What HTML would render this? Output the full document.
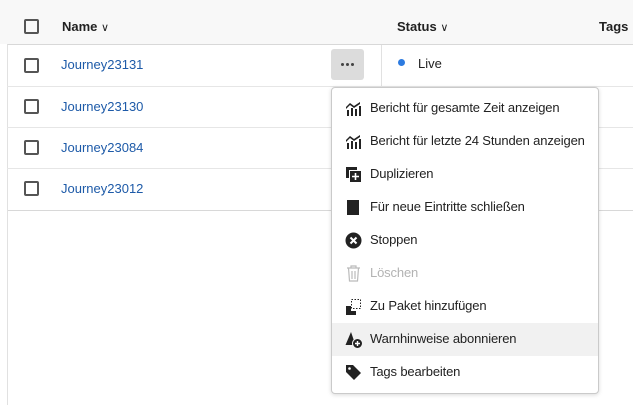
<!DOCTYPE html><html><head><style>
body{margin:0;width:633px;height:405px;background:#fff;font-family:"Liberation Sans",sans-serif;font-size:13px;color:#222;position:relative;overflow:hidden}
.a{position:absolute}
.hdr{left:0;top:0;width:633px;height:44px;background:#f8f8f8}
.cb{width:11px;height:11px;border:2px solid #555;border-radius:2px;position:absolute}
.link{color:#1d5aa8}
.menu{left:331px;top:87px;width:266px;height:305px;border:1px solid #cacaca;border-radius:4px;background:#fff;box-shadow:0 1px 4px rgba(0,0,0,.15);letter-spacing:-0.15px}
.it{position:absolute;left:0;width:266px;height:33px;line-height:32px}
.it span{position:absolute;left:38px}
.it svg{position:absolute;left:13px;top:8px}
</style></head><body>
<div class="a hdr"></div>
<div class="cb" style="left:24px;top:19px"></div>
<div class="a" style="left:62px;top:19px;font-weight:bold">Name <span style="font-weight:normal;font-size:11px">&#8744;</span></div>
<div class="a" style="left:397px;top:19px;font-weight:bold">Status <span style="font-weight:normal;font-size:11px">&#8744;</span></div>
<div class="a" style="left:599px;top:19px;font-weight:bold">Tags</div>
<div class="a" style="left:7px;top:44px;width:626px;height:165px;border-top:1px solid #d8d8d8;border-left:1px solid #e1e1e1;border-bottom:1px solid #d8d8d8"></div>
<div class="a" style="left:7px;top:86px;width:626px;border-top:1px solid #e6e6e6"></div>
<div class="a" style="left:7px;top:127px;width:626px;border-top:1px solid #e6e6e6"></div>
<div class="a" style="left:7px;top:168px;width:626px;border-top:1px solid #e6e6e6"></div>
<div class="a" style="left:381px;top:45px;height:41px;border-left:1px solid #e1e1e1"></div>
<div class="a" style="left:7px;top:210px;width:626px;height:195px;border-left:1px solid #e1e1e1"></div>
<div class="cb" style="left:24px;top:58px"></div><div class="a link" style="left:61px;top:57px">Journey23131</div>
<div class="cb" style="left:24px;top:99px"></div><div class="a link" style="left:61px;top:99px">Journey23130</div>
<div class="cb" style="left:24px;top:140px"></div><div class="a link" style="left:61px;top:140px">Journey23084</div>
<div class="cb" style="left:24px;top:181px"></div><div class="a link" style="left:61px;top:181px">Journey23012</div>
<div class="a" style="left:331px;top:49px;width:33px;height:31px;background:#dcdcdc;border-radius:3px"></div>
<div class="a" style="left:341px;top:63px;width:3px;height:3px;border-radius:50%;background:#444"></div>
<div class="a" style="left:346px;top:63px;width:3px;height:3px;border-radius:50%;background:#444"></div>
<div class="a" style="left:351px;top:63px;width:3px;height:3px;border-radius:50%;background:#444"></div>
<div class="a" style="left:398px;top:59px;width:7px;height:7px;border-radius:50%;background:#2d7be0"></div>
<div class="a" style="left:418px;top:56px">Live</div>
<div class="a menu">
<div class="it" style="top:4px"><svg width="17" height="17" viewBox="0 0 17 17"><path d="M1 7l4-4 4 3 6-4v2l-6 4-4-3-4 4z M2 10h2v6H2z M6 8h2v8H6z M10 9h2v7h-2z M14 6h2v10h-2z" fill="#222"/></svg><span>Bericht für gesamte Zeit anzeigen</span></div>
<div class="it" style="top:37px"><svg width="17" height="17" viewBox="0 0 17 17"><path d="M1 7l4-4 4 3 6-4v2l-6 4-4-3-4 4z M2 10h2v6H2z M6 8h2v8H6z M10 9h2v7h-2z M14 6h2v10h-2z" fill="#222"/></svg><span>Bericht für letzte 24 Stunden anzeigen</span></div>
<div class="it" style="top:70px"><svg width="17" height="17" viewBox="0 0 17 17"><path d="M1 1h11v3H4v8H1z" fill="#222"/><rect x="5" y="5" width="11" height="11" fill="#222"/><path d="M10.5 7v7M7 10.5h7" stroke="#fff" stroke-width="1.6"/></svg><span>Duplizieren</span></div>
<div class="it" style="top:103px"><svg width="17" height="17" viewBox="0 0 17 17"><rect x="2" y="1" width="12" height="15" fill="#222"/></svg><span>Für neue Eintritte schließen</span></div>
<div class="it" style="top:136px"><svg width="17" height="17" viewBox="0 0 17 17"><circle cx="8.5" cy="8.5" r="8" fill="#222"/><path d="M5.5 5.5l6 6M11.5 5.5l-6 6" stroke="#fff" stroke-width="2"/></svg><span>Stoppen</span></div>
<div class="it" style="top:169px;color:#b3b3b3"><svg width="17" height="17" viewBox="0 0 17 17" fill="none" stroke="#bbb" stroke-width="1.2"><path d="M2 3h13M6 3V1h5v2M3.5 3l1 13h8l1-13M7 6v8M10 6v8"/></svg><span>Löschen</span></div>
<div class="it" style="top:202px"><svg width="17" height="17" viewBox="0 0 17 17"><path d="M1 8h5v5h5v4H1z" fill="#222"/><rect x="6.5" y="1.5" width="9" height="9" fill="none" stroke="#222" stroke-dasharray="1.5 1.5"/></svg><span>Zu Paket hinzufügen</span></div>
<div class="it" style="top:235px;background:#f1f1f1"><svg width="18" height="18" viewBox="0 0 18 18"><path d="M6 1L0.5 14h10z" fill="#222"/><circle cx="12.5" cy="12.5" r="5" fill="#222" stroke="#f1f1f1"/><path d="M12.5 10v5M10 12.5h5" stroke="#fff" stroke-width="1.4"/></svg><span>Warnhinweise abonnieren</span></div>
<div class="it" style="top:268px"><svg width="17" height="17" viewBox="0 0 17 17"><path d="M1 1h7l8 8-7 7-8-8z" fill="#222"/><circle cx="4.5" cy="4.5" r="1.3" fill="#fff"/></svg><span>Tags bearbeiten</span></div>
</div>
</body></html>
